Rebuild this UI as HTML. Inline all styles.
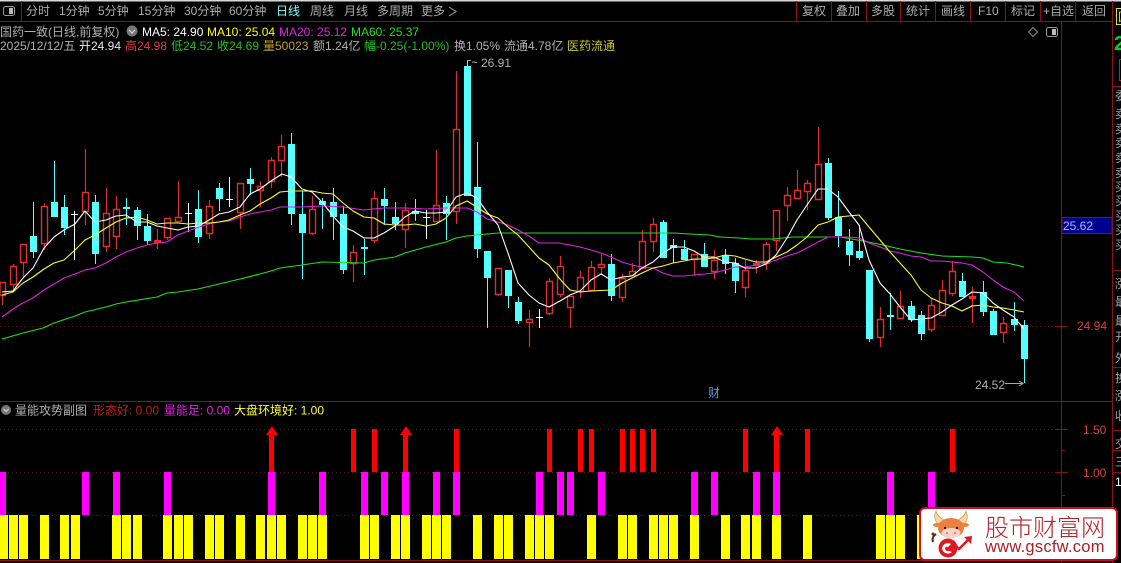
<!DOCTYPE html>
<html><head><meta charset="utf-8"><style>
html,body{margin:0;padding:0;background:#000;width:1121px;height:563px;overflow:hidden}
svg{display:block;position:absolute;left:0;top:0}
text{font-family:"Liberation Sans","Noto Sans CJK SC",sans-serif;font-size:12px}
</style></head><body>
<svg width="1121" height="563" viewBox="0 0 1121 563" xmlns="http://www.w3.org/2000/svg">
<rect width="1121" height="563" fill="#000"/>
<rect width="1121" height="1.5" fill="#d8d8d8"/>
<!-- frame lines -->
<g stroke="#8c1018" stroke-width="1" fill="none">
<path d="M0 21.5H1112M21.5 1V21M796.5 1V21M831.5 1V21M866.5 1V21M900.5 1V21M935.5 1V21M970.5 1V21M1005.5 1V21M1040.5 1V21M1075.5 1V21M1061.5 21V563M1112.5 1V563M0 401.5H1112M0 560.5H1112M1112 86.5H1121M1112 270.5H1121M1112 367.5H1121M1112 430.5H1121M1112 450.5H1121M1112 472.5H1121"/>
<path d="M1055 326.5H1068M1055 429.5H1068M1055 472.5H1068M1061 450.5H1065M1061 495.5H1065M1061 515.5H1065"/>
</g>
<path d="M0 326.5H1055M0 429.5H1055M0 472.5H1055M0 515.5H1055" stroke="#5a1c1c" stroke-width="1" stroke-dasharray="1 3" fill="none"/>
<!-- toolbar -->
<rect x="3.5" y="6.5" width="11" height="9" rx="2" fill="none" stroke="#999"/><rect x="9" y="8" width="4" height="6" fill="#bbb"/>
<g fill="#acacac">
<text x="26" y="15">分时</text><text x="59" y="15">1分钟</text><text x="98" y="15">5分钟</text><text x="138" y="15">15分钟</text><text x="184" y="15">30分钟</text><text x="229" y="15">60分钟</text>
<text x="276" y="15" fill="#7ff">日线</text><text x="310" y="15">周线</text><text x="344" y="15">月线</text><text x="377" y="15">多周期</text><text x="421" y="15">更多</text>
<text x="802" y="15">复权</text><text x="836" y="15">叠加</text><text x="871" y="15">多股</text><text x="906" y="15">统计</text><text x="941" y="15">画线</text><text x="978" y="15">F10</text><text x="1011" y="15">标记</text><text x="1043" y="15">+自选</text><text x="1082" y="15">返回</text>
</g>
<path d="M449 7l7 4.5-7 4.5" fill="none" stroke="#aaa"/>
<path d="M1033 27.5l4.5 4.5-4.5 4.5-4.5-4.5z" fill="none" stroke="#888"/>
<rect x="1046.5" y="27.5" width="11" height="9" rx="2" fill="none" stroke="#999"/><rect x="1052" y="29" width="4" height="6" fill="#bbb"/>
<!-- info -->
<text x="0" y="36" fill="#b0b0b0">国药一致(日线,前复权)</text>
<circle cx="132" cy="31" r="5.5" fill="#777"/><path d="M129 30l3 3 3-3" fill="none" stroke="#ddd"/>
<text x="142" y="36" fill="#fff">MA5: 24.90</text><text x="207" y="36" fill="#ff0">MA10: 25.04</text><text x="279" y="36" fill="#e020e0">MA20: 25.12</text><text x="351" y="36" fill="#20e020">MA60: 25.37</text>
<text x="0" y="50" fill="#b0b0b0">2025/12/12/五</text><text x="79" y="50" fill="#e8e8e8">开24.94</text><text x="125" y="50" fill="#e03c3c">高24.98</text><text x="171" y="50" fill="#20c020">低24.52</text><text x="217" y="50" fill="#20c020">收24.69</text><text x="263" y="50" fill="#c0a020">量50023</text><text x="313" y="50" fill="#b0b0b0">额1.24亿</text><text x="364" y="50" fill="#20c020">幅-0.25(-1.00%)</text><text x="454" y="50" fill="#b0b0b0">换1.05%</text><text x="504" y="50" fill="#b0b0b0">流通4.78亿</text><text x="567" y="50" fill="#c8c820">医药流通</text>
<!-- axis labels -->
<rect x="1062" y="217.5" width="50" height="16" fill="#000090" stroke="#8c1018"/>
<text x="1063" y="230" fill="#a8b8ff">25.62</text>
<text x="1077" y="330" fill="#d84040">24.94</text>
<text x="1083" y="434" fill="#d84040">1.50</text>
<text x="1083" y="477" fill="#d84040">1.00</text>
<text x="481" y="67" fill="#b0b0b0">26.91</text>
<path d="M467.5 66V60.5H471M472 62.5c1.5-2 3 1 5 0" fill="none" stroke="#aaa"/>
<text x="975" y="389" fill="#b0b0b0">24.52</text>
<path d="M1005 383.5H1023M1019 381l4 2.5-4 2.5" fill="none" stroke="#aaa"/>
<text x="708" y="397" fill="#4aa0e8">财</text>
<!-- sidebar clipped labels -->
<g fill="#a0a0a0">
<rect x="1116.5" y="8.5" width="8" height="16" fill="none" stroke="#e0e020"/>
<text x="1118" y="21" fill="#e0e020">国</text>
<text x="1114" y="50" fill="#00d020" style="font-size:20px;font-weight:bold">2</text>
<rect x="1119.5" y="59.5" width="6" height="21" fill="none" stroke="#c02020"/>
<text x="1115" y="100">委</text><text x="1115" y="118">卖</text><text x="1115" y="133">卖</text><text x="1115" y="147">卖</text><text x="1115" y="162">卖</text><text x="1115" y="177">卖</text><text x="1115" y="191">买</text><text x="1115" y="205">买</text><text x="1115" y="220">买</text><text x="1115" y="234">买</text><text x="1115" y="249">买</text>
<text x="1115" y="288">涨</text><text x="1115" y="306">最</text><text x="1115" y="325">最</text><text x="1115" y="341">开</text><text x="1115" y="362">外</text><text x="1115" y="382">换</text><text x="1115" y="400">涨</text><text x="1115" y="420">收</text><text x="1115" y="448">交</text><text x="1115" y="466">三</text><text x="1115" y="486" fill="#fff">1</text>
</g>
<!-- red wicks -->
<path stroke="#dc3030" stroke-width="1.2" fill="none" d="M2.5 282V305M13.5 264V289M23.5 244V278M44.5 203V250M85.5 149V225M106.5 188V252M116.5 196V249M167.5 218V240M178.5 181V221M209.5 200V239M240.5 183V229M260.5 181V207M271.5 157V188M281.5 135V177M312.5 196V235M353.5 245V282M374.5 191V243M405.5 203V248M436.5 150V221M456.5 71V224M498.5 268V296M529.5 310V347M549.5 278V315M560.5 256V297M570.5 296V328M580.5 271V298M591.5 261V290M601.5 254V275M622.5 274V302M632.5 263V275M642.5 230V268M653.5 218V252M694.5 254V276M714.5 250V279M745.5 260V297M766.5 242V270M776.5 210V251M787.5 187V221M797.5 170V198M807.5 180V210M818.5 127V200M880.5 307V347M900.5 291V318M931.5 299V332M942.5 280V315M952.5 261V296M1003.5 317V343M157.5 229V249M756.5 260V273M972.5 287V323"/>
<!-- red hollow bodies -->
<path stroke="#dc3030" stroke-width="1.4" fill="#000" d="M0 282.5H5.5V295.5H0ZM10.5 266.5H16.5V284.5H10.5ZM20.5 244.5H26.5V262.5H20.5ZM41.5 206.5H47.5V243.5H41.5ZM82.5 192.5H88.5V211.5H82.5ZM103.5 213.5H109.5V246.5H103.5ZM113.5 209.5H119.5V236.5H113.5ZM164.5 218.5H170.5V237.5H164.5ZM175.5 217.5H181.5V221.5H175.5ZM206.5 206.5H212.5V233.5H206.5ZM237.5 183.5H243.5V212.5H237.5ZM257.5 186.5H263.5V190.5H257.5ZM268.5 160.5H274.5V181.5H268.5ZM278.5 146.5H284.5V160.5H278.5ZM309.5 209.5H315.5V233.5H309.5ZM350.5 252.5H356.5V263.5H350.5ZM371.5 198.5H377.5V240.5H371.5ZM402.5 210.5H408.5V229.5H402.5ZM433.5 205.5H439.5V221.5H433.5ZM453.5 129.5H459.5V211.5H453.5ZM495.5 268.5H501.5V294.5H495.5ZM526.5 319.5H532.5V322.5H526.5ZM546.5 281.5H552.5V313.5H546.5ZM557.5 266.5H563.5V294.5H557.5ZM567.5 296.5H573.5V307.5H567.5ZM577.5 277.5H583.5V291.5H577.5ZM588.5 267.5H594.5V290.5H588.5ZM598.5 264.5H604.5V267.5H598.5ZM619.5 278.5H625.5V297.5H619.5ZM629.5 271.5H635.5V275.5H629.5ZM639.5 241.5H645.5V268.5H639.5ZM650.5 224.5H656.5V241.5H650.5ZM691.5 254.5H697.5V259.5H691.5ZM711.5 260.5H717.5V271.5H711.5ZM742.5 270.5H748.5V287.5H742.5ZM763.5 244.5H769.5V263.5H763.5ZM773.5 210.5H779.5V240.5H773.5ZM784.5 195.5H790.5V205.5H784.5ZM794.5 190.5H800.5V198.5H794.5ZM804.5 183.5H810.5V191.5H804.5ZM815.5 164.5H821.5V199.5H815.5ZM877.5 319.5H883.5V337.5H877.5ZM897.5 306.5H903.5V318.5H897.5ZM928.5 305.5H934.5V329.5H928.5ZM939.5 290.5H945.5V315.5H939.5ZM949.5 271.5H955.5V293.5H949.5ZM1000.5 323.5H1006.5V332.5H1000.5Z"/>
<!-- red solid flat -->
<path stroke="#ff2020" stroke-width="7" fill="none" d="M157.5 240V243M756.5 263V266M972.5 296V299"/>
<!-- cyan wicks -->
<path stroke="#54ffff" stroke-width="1" fill="none" d="M33.5 202V258M54.5 161V217M64.5 195V235M95.5 195V264M126.5 198V225M137.5 207V240M147.5 214V245M198.5 190V243M219.5 183V211M250.5 168V195M291.5 133V225M302.5 191V279M322.5 198V229M333.5 188V240M343.5 206V274M364.5 239V275M384.5 188V225M395.5 202V230M415.5 199V221M446.5 196V240M467.5 61V196M477.5 142V258M487.5 251V328M508.5 270V308M518.5 297V324M611.5 254V301M663.5 220V258M673.5 239V263M684.5 240V260M704.5 243V267M725.5 249V274M735.5 258V293M828.5 158V220M838.5 191V247M849.5 229V266M859.5 225V260M869.5 270V342M890.5 293V330M911.5 301V322M921.5 311V340M962.5 273V297M983.5 281V316M993.5 309V335M1014.5 302V331M1024.5 320V383"/>
<!-- cyan bodies -->
<path stroke="#54ffff" stroke-width="7" fill="none" d="M33.5 236V252M54.5 202V217M64.5 207V228M95.5 202V254M126.5 207V209M137.5 210V226M147.5 226V241M198.5 209V237M219.5 188V199M250.5 179V184M291.5 144V214M302.5 214V233M322.5 201V205M333.5 202V217M343.5 214V270M364.5 247V249M384.5 199V206M395.5 217V224M415.5 211V214M446.5 203V214M467.5 66V196M477.5 187V249M487.5 251V278M508.5 270V296M518.5 302V321M611.5 264V296M663.5 222V258M673.5 245V248M684.5 249V260M704.5 254V267M725.5 255V264M735.5 263V281M828.5 163V218M838.5 217V236M849.5 241V255M859.5 251V258M869.5 270V339M890.5 315V317M911.5 306V320M921.5 315V334M962.5 281V297M983.5 292V312M993.5 311V335M1014.5 319V325M1024.5 325V359"/>
<!-- white dojis -->
<path stroke="#fff" fill="none" d="M74.5 211V260M71 214.5H78M188.5 203V232M185 213.5H192M229.5 177V207M226 199.5H233M426.5 210V239M423 217.5H430M539.5 309V328M536 317.5H543"/>
<!-- MA lines -->
<g fill="none" stroke-width="1.1" stroke-linejoin="round">
<polyline stroke="#20e020" points="2,339 23,333 43,328 54,323 75,316 85,312 106,307 116,304 126,302 157,297 167,293 178,292 198,289 219,284 240,279 260,274 271,271 280,268 302,265 322,262 364,263 374,260 395,257 405,253 426,247 446,242 456,238 467,236 487,234 498,233 587,233 673,233 690,234 710,235 720,237 740,238 750,239 773,239 793,237 840,237 863,241 883,245 900,249 921,253 942,256 972,257 983,258 993,262 1007,263 1024,267"/>
<polyline stroke="#e020e0" points="2,317 13,309 23,303 33,298 44,290 54,284 64,278 75,274 85,270 95,268 106,263 116,257 126,252 137,248 147,245 157,243 167,242 178,235 188,231 199,227 209,224 219,222 229,221 240,217 250,214 260,212 271,210 280,207 302,207 322,206 343,207 364,210 384,208 405,208 426,209 446,208 467,208 477,212 487,219 498,222 508,225 518,230 529,236 539,243 559,243 570,245 580,247 591,250 601,253 611,257 622,262 632,265 642,267 653,268 663,273 673,276 684,276 694,275 704,274 714,273 725,270 735,267 745,267 756,265 766,263 776,260 787,256 797,253 807,248 818,242 828,237 838,237 849,237 859,238 869,243 880,247 890,251 900,253 911,256 921,257 931,261 942,261 952,262 962,263 972,265 983,272 993,280 1003,287 1014,292 1024,301"/>
<polyline stroke="#ffff30" points="2,295 13,292 23,283 33,277 44,269 54,263 64,260 75,250 85,240 95,235 106,228 116,222 126,218 137,217 147,220 157,224 167,223 178,223 188,224 199,223 209,223 219,222 229,220 240,215 250,211 260,204 271,198 280,192 291,191 312,191 322,193 333,194 343,203 353,211 364,217 374,218 384,224 395,225 405,225 415,224 426,226 436,224 446,218 456,206 467,201 477,207 487,214 498,218 508,227 518,235 529,247 539,258 549,265 559,278 570,290 580,292 591,291 611,290 622,283 632,278 642,273 653,268 663,266 673,263 684,261 694,259 704,259 714,258 725,255 735,256 745,259 756,262 766,262 776,257 787,252 797,245 807,237 818,225 828,222 838,217 859,215 869,227 880,240 890,252 900,263 911,275 921,290 931,298 942,303 952,306 962,311 972,306 983,305 993,307 1003,308 1014,310 1024,312"/>
<polyline stroke="#fff" points="2,292 13,291 23,278 33,268 44,248 54,237 64,230 75,224 85,211 95,222 106,220 116,216 126,215 137,222 147,222 157,226 167,228 178,230 188,227 199,226 209,220 219,214 229,212 240,207 250,194 260,189 271,181 282,174 291,177 302,189 312,192 322,202 333,216 343,227 353,231 364,238 374,238 384,233 395,226 405,217 415,211 426,213 436,213 446,212 456,197 467,193 477,198 487,212 498,225 508,253 518,283 529,295 539,303 549,307 560,301 570,295 580,291 591,280 601,274 611,280 622,277 632,276 642,268 653,262 663,253 673,247 684,247 694,251 704,257 714,257 725,262 735,263 745,268 756,268 766,264 776,255 787,238 797,220 807,205 818,189 828,189 838,197 849,212 859,225 869,260 880,283 890,294 900,307 911,320 921,319 931,318 942,312 952,305 962,299 972,292 983,293 993,303 1003,310 1014,317 1024,329"/>
</g>
<!-- sub panel header -->
<circle cx="6" cy="410" r="5" fill="#777"/><path d="M3.5 409l2.5 2.500 2.500-2.500" fill="none" stroke="#ddd"/>
<text x="15" y="414.5" fill="#b0b0b0">量能攻势副图</text>
<text x="93" y="414.5" fill="#c81818">形态好: 0.00</text>
<text x="164" y="414.5" fill="#e020e0">量能足: 0.00</text>
<text x="234" y="414.5" fill="#ffff30">大盘环境好: 1.00</text>
<!-- yellow bars -->
<path fill="#ff0" d="M0 515h8v44H0zM9 515h9v44H9zM19 515h9v44h-9zM40 515h9v44h-9zM60 515h9v44h-9zM71 515h9v44h-9zM112 515h9v44h-9zM122 515h9v44h-9zM133 515h9v44h-9zM163 515h9v44h-9zM174 515h9v44h-9zM184 515h9v44h-9zM205 515h9v44h-9zM215 515h9v44h-9zM236 515h9v44h-9zM256 515h9v44h-9zM267 515h9v44h-9zM277 515h9v44h-9zM298 515h9v44h-9zM308 515h9v44h-9zM318 515h9v44h-9zM360 515h9v44h-9zM370 515h9v44h-9zM391 515h9v44h-9zM401 515h9v44h-9zM422 515h9v44h-9zM432 515h9v44h-9zM442 515h9v44h-9zM473 515h9v44h-9zM494 515h9v44h-9zM504 515h9v44h-9zM525 515h9v44h-9zM535 515h9v44h-9zM545 515h9v44h-9zM587 515h9v44h-9zM618 515h9v44h-9zM628 515h9v44h-9zM649 515h9v44h-9zM659 515h9v44h-9zM669 515h9v44h-9zM690 515h9v44h-9zM721 515h9v44h-9zM741 515h9v44h-9zM752 515h9v44h-9zM772 515h9v44h-9zM803 515h9v44h-9zM876 515h9v44h-9zM886 515h9v44h-9zM896 515h9v44h-9zM917 515h9v44h-9z"/>
<!-- magenta bars -->
<path fill="#f0f" d="M0 472h6v43H0zM82 472h7v43h-7zM113 472h7v43h-7zM164 472h7v43h-7zM268 472h7v43h-7zM319 472h7v43h-7zM361 472h7v43h-7zM381 472h7v43h-7zM402 472h7v43h-7zM433 472h7v43h-7zM453 472h7v43h-7zM536 472h7v43h-7zM557 472h7v43h-7zM567 472h7v43h-7zM598 472h7v43h-7zM691 472h7v43h-7zM711 472h7v43h-7zM753 472h7v43h-7zM773 472h7v43h-7zM887 472h7v43h-7zM928 472h7v36h-7z"/>
<!-- red bars and arrows -->
<path fill="#f00" d="M351 429h5v43h-5zM372 429h5v43h-5zM454 429h5v43h-5zM547 429h5v43h-5zM578 429h5v43h-5zM589 429h5v43h-5zM620 429h5v43h-5zM630 429h5v43h-5zM640 429h5v43h-5zM651 429h5v43h-5zM743 429h5v43h-5zM805 429h5v43h-5zM950 429h5v43h-5zM269 435h5v37h-5zM266 435l6-9 6 9zM403 435h5v37h-5zM400 435l6-9 6 9zM774 435h5v37h-5zM771 435l6-9 6 9z"/>
<!-- logo -->
<rect x="920" y="508" width="197" height="52" rx="5" fill="#fff" stroke="#d00a1e" stroke-width="2"/>
<!-- tail -->
<path d="M936 534c-3 2-4 5-3 8" fill="none" stroke="#5a3018" stroke-width="2"/><circle cx="933" cy="534" r="1.5" fill="#5a3018"/>
<!-- horns -->
<path d="M938 524c-4-4-4-9-2-13 1 4 4 7 8 9z" fill="#f3d9a0" stroke="#c98b3a" stroke-width=".6"/>
<path d="M964 524c4-4 4-9 2-13-1 4-4 7-8 9z" fill="#f3d9a0" stroke="#c98b3a" stroke-width=".6"/>
<!-- body -->
<circle cx="948" cy="548" r="9.5" fill="#dd1a24"/>
<path d="M942 548a6 6 0 0 1 9-4l-3 3a2 2 0 0 0-3 1 3 3 0 0 0 4 3l3 1a6 6 0 0 1-10-4z" fill="#fff"/>
<!-- head -->
<ellipse cx="951" cy="528" rx="13" ry="10" fill="#ea8140"/>
<ellipse cx="937" cy="525" rx="4" ry="2" fill="#ea8140"/><ellipse cx="965" cy="525" rx="4" ry="2" fill="#ea8140"/>
<ellipse cx="951" cy="533" rx="9.5" ry="5" fill="#fbd3c8"/>
<circle cx="945" cy="528" r="1.2" fill="#3a1a10"/><circle cx="957" cy="528" r="1.2" fill="#3a1a10"/>
<circle cx="947" cy="533" r=".9" fill="#b55"/><circle cx="955" cy="533" r=".9" fill="#b55"/>
<!-- arrow -->
<path d="M951 551l5-5 3 3 9-9" fill="none" stroke="#dd1a24" stroke-width="2.5"/><path d="M964 537l8-1-1 8z" fill="#dd1a24"/>
<text x="985" y="536" fill="#b8202a" style="font-family:'Noto Sans CJK SC','Liberation Sans',sans-serif;font-size:24px;font-weight:300">股市财富网</text>
<text x="985" y="552" fill="#a8202a" style="font-size:16.5px;letter-spacing:.25px">www.gscfw.com</text>
</svg>
</body></html>
